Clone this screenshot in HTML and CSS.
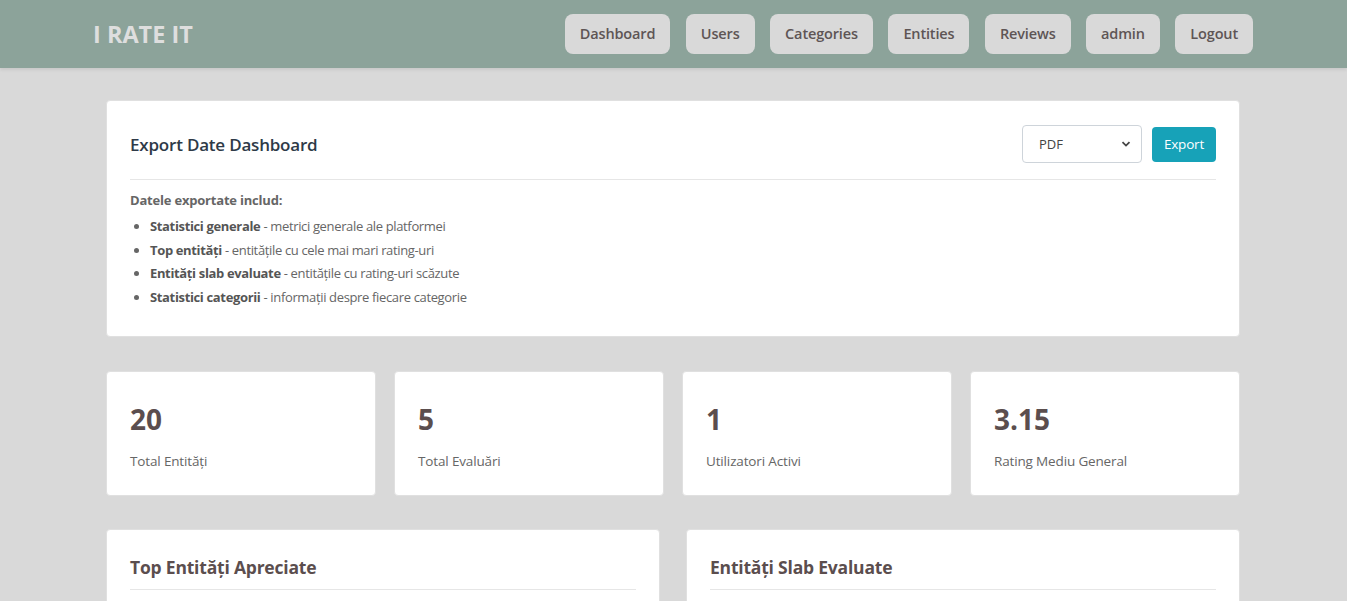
FILE: index.html
```html
<!DOCTYPE html>
<html lang="ro">
<head>
<meta charset="utf-8">
<title>I RATE IT</title>
<link rel="stylesheet" href="styles.css">
</head>
<body>
<header class="navbar">
  <div class="brand">I RATE IT</div>
  <nav class="nav">
    <a class="nav-btn">Dashboard</a>
    <a class="nav-btn">Users</a>
    <a class="nav-btn">Categories</a>
    <a class="nav-btn">Entities</a>
    <a class="nav-btn">Reviews</a>
    <a class="nav-btn">admin</a>
    <a class="nav-btn">Logout</a>
  </nav>
</header>
<main class="container">
  <section class="card export-card">
    <div class="export-head">
      <h2 class="export-title">Export Date Dashboard</h2>
      <div class="export-controls">
        <div class="select">PDF<svg class="chev" width="10" height="8" viewBox="0 0 10 8"><path d="M1.5 2.2 L5 5.6 L8.5 2.2" fill="none" stroke="#444" stroke-width="1.8"/></svg></div>
        <button class="btn-export">Export</button>
      </div>
    </div>
    <div class="export-body">
      <p class="includes">Datele exportate includ:</p>
      <ul class="list">
        <li><b>Statistici generale</b> - metrici generale ale platformei</li>
        <li><b>Top entități</b> - entitățile cu cele mai mari rating-uri</li>
        <li><b>Entități slab evaluate</b> - entitățile cu rating-uri scăzute</li>
        <li><b>Statistici categorii</b> - informații despre fiecare categorie</li>
      </ul>
    </div>
  </section>
  <section class="stats">
    <div class="card stat"><div class="stat-num">20</div><div class="stat-label">Total Entități</div></div>
    <div class="card stat"><div class="stat-num">5</div><div class="stat-label">Total Evaluări</div></div>
    <div class="card stat"><div class="stat-num">1</div><div class="stat-label">Utilizatori Activi</div></div>
    <div class="card stat"><div class="stat-num">3.15</div><div class="stat-label">Rating Mediu General</div></div>
  </section>
  <section class="panels">
    <div class="card panel"><h3 class="panel-title">Top Entități Apreciate</h3></div>
    <div class="card panel"><h3 class="panel-title">Entități Slab Evaluate</h3></div>
  </section>
</main>
</body>
</html>
```

FILE: styles.css
```css
* { box-sizing: border-box; }
html, body { margin: 0; padding: 0; }
body {
  background: #d9d9d9;
  font-family: "Open Sans", "Noto Sans", sans-serif;
  color: #555;
  height: 601px;
  overflow: hidden;
}
.navbar {
  height: 68px;
  background: #8ca39a;
  display: flex;
  align-items: center;
  justify-content: space-between;
  padding: 0 94px 0 93px;
  box-shadow: 0 2px 3px rgba(0,0,0,0.08);
}
.brand {
  color: #dedede;
  font-weight: 700;
  font-size: 23.5px;
  letter-spacing: 0;
}
.nav { display: flex; gap: 15.5px; }
.nav-btn {
  background: #d9d9d9;
  color: #5e5555;
  font-size: 14.5px;
  font-weight: 600;
  height: 40px;
  line-height: 40px;
  padding: 0 15px;
  border-radius: 8px;
  letter-spacing: -0.15px;
}
.container {
  width: 1134px;
  margin: 32px 0 0 106px;
}
.card {
  background: #fff;
  border-radius: 4px;
  border: 1px solid #e0e0e0;
}
.export-card { padding: 0 23px 20px; height: 237px; }
.export-head {
  display: flex;
  justify-content: space-between;
  align-items: center;
  height: 79px;
  padding-top: 8px;
  border-bottom: 1px solid #e6e6e6;
}
.export-title {
  margin: 0;
  font-size: 17px;
  font-weight: 600;
  color: #2e3a48;
  letter-spacing: -0.2px;
}
.export-controls { display: flex; gap: 10px; align-items: center; }
.select {
  width: 120px;
  height: 38px;
  border: 1px solid #ced4da;
  border-radius: 4px;
  font-size: 13px;
  color: #444;
  padding: 0 10px 0 16px;
  display: flex;
  align-items: center;
  justify-content: space-between;
}
.btn-export {
  background: #17a2b8;
  color: #fff;
  border: none;
  border-radius: 4px;
  height: 35px;
  padding: 0 12px;
  font-family: inherit;
  font-size: 13.5px;
  letter-spacing: -0.2px;
}
.export-body { padding-top: 11px; font-size: 13px; color: #666; }
.includes { margin: 0 0 6px; font-weight: 700; color: #666; letter-spacing: -0.2px; }
.list { margin: 0; padding-left: 20px; }
.list li { line-height: 23.7px; letter-spacing: -0.35px; }
.list b { color: #555; }
.stats {
  display: grid;
  grid-template-columns: repeat(4, 1fr);
  gap: 18px;
  margin-top: 34px;
}
.stat { height: 125px; padding: 28px 23px 0; }
.stat-num {
  font-size: 28px;
  font-weight: 700;
  color: #5b4e4e;
  line-height: 38px;
}
.stat-label {
  margin-top: 14px;
  font-size: 13.5px;
  color: #666;
  letter-spacing: -0.15px;
}
.panels {
  display: grid;
  grid-template-columns: 1fr 1fr;
  gap: 26px;
  margin-top: 33px;
}
.panel { height: 120px; padding: 25px 23px 0; }
.panel-title {
  margin: 0;
  font-size: 17.5px;
  font-weight: 700;
  color: #5b4e4e;
  padding-bottom: 10px;
  border-bottom: 1px solid #e6e6e6;
  letter-spacing: -0.2px;
}
```
